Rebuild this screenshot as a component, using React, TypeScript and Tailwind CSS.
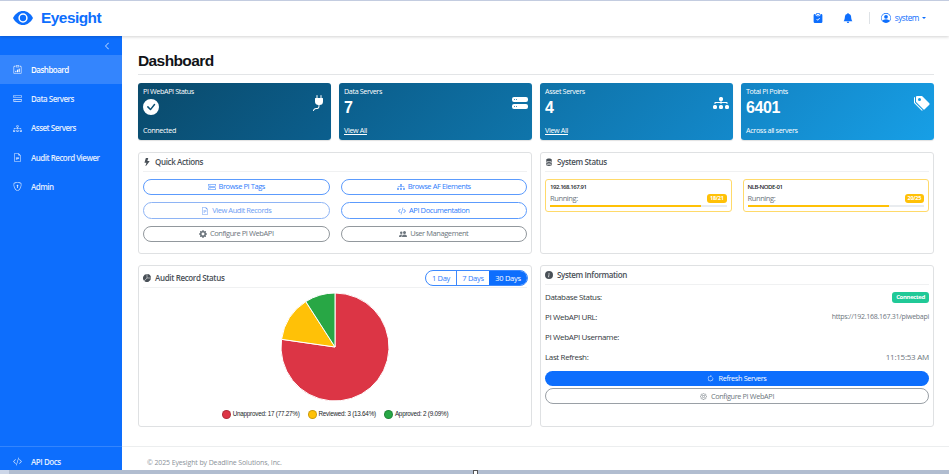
import React, { useState } from "react";
import {
  BsArrowClockwise,
  BsBellFill,
  BsCheckCircleFill,
  BsChevronLeft,
  BsClipboardCheckFill,
  BsClipboardData,
  BsCodeSlash,
  BsDatabaseFill,
  BsDiagram3,
  BsDiagram3Fill,
  BsFileEarmarkText,
  BsGear,
  BsGearFill,
  BsHddStack,
  BsHddStackFill,
  BsInfoCircleFill,
  BsLightningFill,
  BsPeopleFill,
  BsPersonCircle,
  BsPieChartFill,
  BsPlugFill,
  BsShieldLock,
  BsTagsFill,
} from "react-icons/bs";

const navItems = [
  { label: "Dashboard", icon: BsClipboardData },
  { label: "Data Servers", icon: BsHddStack },
  { label: "Asset Servers", icon: BsDiagram3 },
  { label: "Audit Record Viewer", icon: BsFileEarmarkText },
  { label: "Admin", icon: BsShieldLock },
];

const actions = [
  { label: "Browse PI Tags", icon: BsHddStack, style: "border-[#5c9bfd] text-[#2f7dfb]" },
  { label: "Browse AF Elements", icon: BsDiagram3, style: "border-[#5c9bfd] text-[#2f7dfb]" },
  { label: "View Audit Records", icon: BsFileEarmarkText, style: "border-[#8eb4f5] text-[#6d9df3]" },
  { label: "API Documentation", icon: BsCodeSlash, style: "border-[#5c9bfd] text-[#2f7dfb]" },
  { label: "Configure PI WebAPI", icon: BsGearFill, style: "border-[#92989d] text-[#6c757d]" },
  { label: "User Management", icon: BsPeopleFill, style: "border-[#92989d] text-[#6c757d]" },
];

const servers = [
  { name: "192.168.167.91", running: 18, total: 21 },
  { name: "NLB-NODE-01", running: 20, total: 25 },
];

const records = [
  { label: "Unapproved: 17 (77.27%)", color: "bg-[#dc3545]" },
  { label: "Reviewed: 3 (13.64%)", color: "bg-[#ffc107]" },
  { label: "Approved: 2 (9.09%)", color: "bg-[#28a745]" },
];

function Header() {
  return (
    <header className="relative z-10 flex h-9 shrink-0 items-center border-t border-[#c3cce0] bg-white pl-[13px] pr-[23px] text-[#0d6efd] shadow-[0_1px_3px_rgba(0,0,0,0.18)]">
      <svg viewBox="0 0 20 14" className="mb-px h-[14px] w-5">
        <path d="M0 7C2.2 2.700 5.800 0 10 0s7.800 2.700 10 7c-2.200 4.300-5.800 7-10 7S2.200 11.300 0 7Z" fill="#0d6efd" />
        <circle cx="10" cy="7" r="3.900" fill="#0d6efd" stroke="#fff" strokeWidth="1.500" />
      </svg>
      <span className="mb-px ml-2 font-['Liberation_Sans',sans-serif] text-[15.400px] font-bold leading-none tracking-[-0.500px]">Eyesight</span>
      <div className="ml-auto flex items-center">
        <BsClipboardCheckFill className="size-[10px]" />
        <BsBellFill className="ml-5 size-[10px]" />
        <span className="ml-4 h-3 w-px bg-[#dee2e6]" />
        <BsPersonCircle className="ml-[11px] size-[10px]" />
        <span className="ml-1 text-[8.200px] tracking-[-0.450px]">system</span>
        <span className="ml-[3px] border-x-2 border-t-2 border-x-transparent border-t-[#0d6efd]" />
      </div>
    </header>
  );
}

function Sidebar() {
  return (
    <aside className="flex w-[122px] shrink-0 flex-col bg-[#0d6efd] text-[8px] font-semibold text-white">
      <div className="flex h-[19px] items-center justify-end pr-[11px]">
        <BsChevronLeft className="size-2" />
      </div>
      <nav>
        {navItems.map(({ label, icon: Icon }, i) => (
          <a
            key={label}
            href="#"
            className={`flex h-[29.300px] items-center gap-[9px] pl-[13px] ${i === 0 ? "bg-[#3485fd]" : "text-[#e3eeff]"}`}
          >
            <Icon className="size-[9px]" />
            <span className="tracking-[-0.520px]">{label}</span>
          </a>
        ))}
      </nav>
      <a href="#" className="mt-auto flex h-6 items-center gap-[9px] border-t border-[#3485fd] pl-[13px] pt-[6px] text-[#e3eeff]">
        <BsCodeSlash className="size-[9px]" />
        <span className="tracking-[-0.450px]">API Docs</span>
      </a>
    </aside>
  );
}

function StatCard({ title, icon: Icon, gradient, children, footer, link }: any) {
  return (
    <div className={`flex h-[57px] flex-1 items-stretch justify-between rounded-[3px] pl-[5px] pr-1 text-white shadow-[0_1px_1px_rgba(0,0,0,0.12)] ${gradient}`}>
      <div className="flex flex-col pt-1 text-[7.200px] leading-[9px]">
        <span className="tracking-[-0.380px]">{title}</span>
        <div className="flex h-[22px] items-center font-['Liberation_Sans',sans-serif] text-[16px] font-bold tracking-[-0.400px]">{children}</div>
        <span className={`mt-2 tracking-[-0.350px] ${link ? "underline" : ""}`}>{footer}</span>
      </div>
      <Icon className="mt-3 size-4" />
    </div>
  );
}

function Panel({ title, icon: Icon, extra, className, children }: any) {
  return (
    <section className={`flex flex-col rounded-[3px] border border-[#dfe1e3] bg-white px-1 ${className}`}>
      <div className="flex shrink-0 items-center border-b border-[#f0f1f2] text-[#495057]">
        <Icon className="size-2" />
        <h2 className="ml-1 py-[3px] text-[8px] font-semibold leading-3 tracking-[-0.360px]">{title}</h2>
        {extra}
      </div>
      {children}
    </section>
  );
}

function AuditChart() {
  return (
    <div className="flex flex-col items-center pt-[5px]">
      <svg viewBox="-54 -54 108 108" className="size-[108px]" stroke="#fff" strokeWidth="1">
        <path d="M0 0V-54A54 54 0 1 1 -53.450 -7.680Z" fill="#dc3545" />
        <path d="M0 0L-53.450 -7.680A54 54 0 0 1 -29.190 -45.430Z" fill="#ffc107" />
        <path d="M0 0L-29.190 -45.430A54 54 0 0 1 0 -54Z" fill="#28a745" />
      </svg>
      <div className="mt-2 flex gap-2 font-['Liberation_Sans',sans-serif] text-[6.300px] leading-[10px] text-[#212529]">
        {records.map((r) => (
          <div key={r.label} className="flex items-center gap-[2px]">
            <span className={`size-[9px] rounded-full border border-black/20 ${r.color}`} />
            <span className="tracking-[-0.230px]">{r.label}</span>
          </div>
        ))}
      </div>
    </div>
  );
}

function RangeTabs() {
  const [range, setRange] = useState("30 Days");
  return (
    <div className="-mr-px mb-px ml-auto flex h-4 overflow-hidden rounded-full border border-[#3c89fd] text-[7.500px] text-[#2f7dfb]">
      {["1 Day", "7 Days", "30 Days"].map((r, i) => (
        <button
          key={r}
          onClick={() => setRange(r)}
          className={`leading-[14px] tracking-[-0.280px] ${i === 0 ? "w-[30px]" : i === 1 ? "w-[33px] border-l border-[#3c89fd]" : "w-[38px]"} ${range === r ? "bg-[#0d6efd] text-white" : ""}`}
        >
          {r}
        </button>
      ))}
    </div>
  );
}

function InfoRow({ label, children }: any) {
  return (
    <div className="flex h-5 items-center justify-between">
      <span className="tracking-[-0.360px] text-[#343a40]">{label}</span>
      {children}
    </div>
  );
}

export default function App() {
  return (
    <div className="flex h-[474px] w-[949px] flex-col overflow-hidden bg-white font-['Open_Sans','Noto_Sans',sans-serif]">
      <Header />
      <div className="flex min-h-0 flex-1">
        <Sidebar />
        <div className="flex flex-1 flex-col">
          <main className="flex-1 pl-4 pr-[15px]">
            <h1 className="mt-[15px] h-6 border-b border-[#e3e5e7] font-['Liberation_Sans',sans-serif] text-[15.500px] font-bold leading-5 tracking-[-0.600px] text-[#111418]">
              Dashboard
            </h1>
            <div className="mt-2 flex gap-2">
              <StatCard title="PI WebAPI Status" icon={BsPlugFill} footer="Connected" gradient="bg-linear-135 from-[#0a4a6b] to-[#0b5f8e]">
                <BsCheckCircleFill className="size-4" />
              </StatCard>
              <StatCard title="Data Servers" icon={BsHddStackFill} footer="View All" link gradient="bg-linear-135 from-[#0b5d8a] to-[#0f75ab]">
                7
              </StatCard>
              <StatCard title="Asset Servers" icon={BsDiagram3Fill} footer="View All" link gradient="bg-linear-135 from-[#0f72a7] to-[#1389cb]">
                4
              </StatCard>
              <StatCard title="Total PI Points" icon={BsTagsFill} footer="Across all servers" gradient="bg-linear-135 from-[#1384c4] to-[#179fe6]">
                6401
              </StatCard>
            </div>
            <div className="mt-3 grid grid-cols-2 gap-x-2 gap-y-[11px]">
              <Panel title="Quick Actions" icon={BsLightningFill} className="h-[102px]">
                <div className="mt-[7px] grid grid-cols-2 gap-x-[11px] gap-y-[7px]">
                  {actions.map(({ label, icon: Icon, style }) => (
                    <button key={label} className={`flex h-[16.400px] items-center justify-center gap-[3px] rounded-full border text-[7.500px] leading-none ${style}`}>
                      <Icon className="size-2" />
                      <span className="tracking-[-0.430px]">{label}</span>
                    </button>
                  ))}
                </div>
              </Panel>
              <Panel title="System Status" icon={BsDatabaseFill} className="h-[102px]">
                <div className="mt-[7px] grid grid-cols-2 gap-x-[11px]">
                  {servers.map((s) => (
                    <div key={s.name} className="h-[33px] rounded-[3px] border border-[#ffda6a] px-1 pt-[3px]">
                      <p className="text-[6px] font-semibold leading-[9px] tracking-[-0.450px] text-[#212529]">{s.name}</p>
                      <div className="flex h-[13px] items-center justify-between text-[7.500px] text-[#6c757d]">
                        <span className="tracking-[-0.400px]">Running:</span>
                        <span className="rounded-[3px] bg-[#ffc107] px-[3px] text-[5.500px] font-bold leading-[9px] tracking-[-0.300px] text-white">
                          {s.running}/{s.total}
                        </span>
                      </div>
                      <div className="h-[2px] bg-[#e9ecef]">
                        <div className="h-full bg-[#ffc107]" style={{ width: `${(s.running / s.total) * 100}%` }} />
                      </div>
                    </div>
                  ))}
                </div>
              </Panel>
              <Panel title="Audit Record Status" icon={BsPieChartFill} extra={<RangeTabs />} className="h-[162px] pt-[3px]">
                <AuditChart />
              </Panel>
              <Panel title="System Information" icon={BsInfoCircleFill} className="h-[162px]">
                <div className="mt-[2px] text-[8px]">
                  <InfoRow label="Database Status:">
                    <span className="rounded-[3px] bg-[#20c997] px-1 text-[6px] font-bold leading-[11px] tracking-[-0.350px] text-white">Connected</span>
                  </InfoRow>
                  <InfoRow label="PI WebAPI URL:">
                    <span className="text-[7px] tracking-[-0.270px] text-[#6c757d]">https://192.168.167.31/piwebapi</span>
                  </InfoRow>
                  <InfoRow label="PI WebAPI Username:" />
                  <InfoRow label="Last Refresh:">
                    <span className="tracking-[-0.250px] text-[#6c757d]">11:15:53 AM</span>
                  </InfoRow>
                </div>
                <button className="mt-1 flex h-[15px] shrink-0 items-center justify-center gap-1 rounded-full bg-[#0d6efd] text-[7.300px] text-white">
                  <BsArrowClockwise className="size-[7px]" />
                  <span className="tracking-[-0.350px]">Refresh Servers</span>
                </button>
                <button className="mt-[2px] flex h-4 shrink-0 items-center justify-center gap-1 rounded-full border border-[#9aa0a6] text-[7.300px] text-[#6c757d]">
                  <BsGear className="size-[7px]" />
                  <span className="tracking-[-0.350px]">Configure PI WebAPI</span>
                </button>
              </Panel>
            </div>
          </main>
          <footer className="h-6 border-t border-[#eceeef] pl-[25px] pt-[10px] text-[7px] leading-3 tracking-[-0.120px] text-[#8b9299]">
            © 2025 Eyesight by Deadline Solutions, Inc.
          </footer>
        </div>
      </div>
      <div className="flex h-1 shrink-0 bg-[#b1bdd0]">
        <span className="w-[9px] bg-[#ccd6e8]" />
        <span className="ml-[464px] w-[5px] border border-b-0 border-[#555] bg-white" />
      </div>
    </div>
  );
}
